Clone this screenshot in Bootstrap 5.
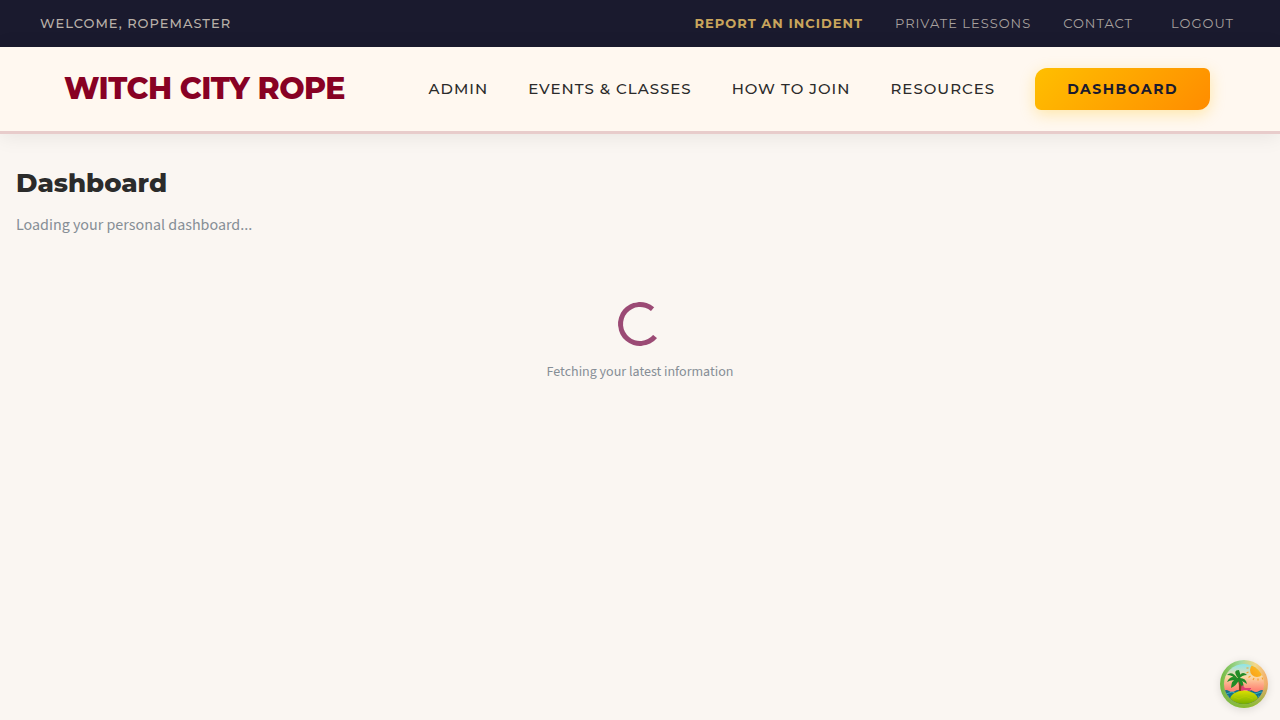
<!DOCTYPE html>
<html lang="en">
<head>
<meta charset="utf-8">
<meta name="viewport" content="width=device-width, initial-scale=1">
<title>Dashboard | Witch City Rope</title>
<link href="https://cdn.jsdelivr.net/npm/bootstrap@5.3.0/dist/css/bootstrap.min.css" rel="stylesheet">
<style>
  :root { --display: Montserrat, Inter, "Liberation Sans", sans-serif; }
  body { background: #faf6f2; color: #2b2b2b; font-family: "Source Sans 3", "Noto Sans CJK SC", sans-serif; }
  a { text-decoration: none; }
  .utility { background: #1a1a2e; color: #b8b0a8; font: 500 13px/23px var(--display); letter-spacing: 1px; padding: 12px 40px; text-transform: uppercase; }
  .utility nav { gap: 32px; }
  .utility a, .utility button { color: #a8a19e; font-weight: 400; }
  .utility a.incident { color: #c9a55c; font-weight: 700; }
  .utility button { background: none; border: 0; padding: 0 6px; letter-spacing: 1px; text-transform: uppercase; line-height: 23px; }
  .masthead { background: #fff8f0; border-bottom: 3px solid #e8cccb; box-shadow: 0 2px 20px rgba(0,0,0,.08); padding: 21px 70px 21px 64px; }
  .masthead .navbar-brand { color: #880124; font: 800 30px/42px var(--display); letter-spacing: -0.5px; padding: 0; margin: 0; }
  .main-links { gap: 40px; }
  .main-links a { color: #2b2b2b; font: 500 15px/42px var(--display); letter-spacing: 1px; text-transform: uppercase; }
  .main-links .btn-dash { background: linear-gradient(135deg, #ffbf00, #ff8c00); border-radius: 12px 6px 12px 6px; box-shadow: 0 4px 15px rgba(255,191,0,.3); color: #1a1a2e; font-weight: 700; font-size: 14px; letter-spacing: 1.5px; padding: 0 32px; }
  h1 { font: 800 26px/34px var(--display); margin: 0 0 12px; }
  .soft { color: #868e96; }
  .intro { font-size: 16px; line-height: 26px; }
  .note { font-size: 14px; line-height: 20px; }
  .loader { width: 44px; height: 44px; border-width: 5px; color: #9b4a75; animation: none; rotate: -5deg; }
  .island { position: fixed; right: 12px; bottom: 12px; width: 48px; height: 48px; border: 0; padding: 0; border-radius: 50%; background: none; box-shadow: 0 2px 8px rgba(0,0,0,.12); }
</style>
</head>
<body>
<div class="utility d-flex justify-content-between">
  <span>Welcome, RopeMaster</span>
  <nav class="d-flex" aria-label="Account">
    <a href="#" class="incident">Report an Incident</a>
    <a href="#">Private Lessons</a>
    <a href="#">Contact</a>
    <button type="button">Logout</button>
  </nav>
</div>
<header class="masthead d-flex justify-content-between align-items-center">
  <a href="#" class="navbar-brand">WITCH CITY ROPE</a>
  <nav class="main-links d-flex align-items-center" aria-label="Main">
    <a href="#">Admin</a>
    <a href="#">Events &amp; Classes</a>
    <a href="#">How to Join</a>
    <a href="#">Resources</a>
    <a href="#" class="btn-dash">Dashboard</a>
  </nav>
</header>
<main class="px-3 pt-3">
  <h1 class="pt-3">Dashboard</h1>
  <p class="soft intro">Loading your personal dashboard...</p>
  <div class="d-flex flex-column align-items-center gap-3 py-5" role="status">
    <div class="spinner-border loader"></div>
    <p class="soft note mb-0">Fetching your latest information</p>
  </div>
</main>
<button type="button" class="island" aria-label="Open query tools">
  <svg class="d-block" width="48" height="48" viewBox="0 0 48 48" aria-hidden="true">
    <defs>
      <linearGradient id="rim" x1="0" y1=".4" x2="1" y2=".5"><stop offset="0" stop-color="#73b93a"/><stop offset=".4" stop-color="#a5dba5"/><stop offset=".7" stop-color="#f4d788"/><stop offset="1" stop-color="#f0a868"/></linearGradient>
      <linearGradient id="rimlow" x1="0" y1="0" x2="0" y2="1"><stop offset=".5" stop-color="#6ba43a" stop-opacity="0"/><stop offset="1" stop-color="#86b82c"/></linearGradient>
      <linearGradient id="sky" x1="0" y1="4" x2="0" y2="36" gradientUnits="userSpaceOnUse"><stop offset="0" stop-color="#8be6ea"/><stop offset=".4" stop-color="#fbd9a4"/><stop offset=".8" stop-color="#ff8775"/></linearGradient>
      <linearGradient id="sand" x1="0" y1="0" x2="0" y2="1"><stop offset="0" stop-color="#dde000"/><stop offset=".7" stop-color="#79b000"/></linearGradient>
      <linearGradient id="sun" x1="1" y1="0" x2="0" y2="1"><stop offset="0" stop-color="#ffc928"/><stop offset="1" stop-color="#f99e17"/></linearGradient>
      <clipPath id="disc"><circle cx="24" cy="24" r="20"/></clipPath>
    </defs>
    <circle cx="24" cy="24" r="24" fill="url(#rim)"/><circle cx="24" cy="24" r="24" fill="url(#rimlow)"/>
    <g clip-path="url(#disc)">
      <path d="M0 0h48v48H0z" fill="url(#sky)"/>
      <circle cx="37" cy="10" r="7" fill="url(#sun)"/>
      <path d="M28.5 8h-2M28.5 12l-2 1M30.5 16l-2 1.5M34 18l-1 2M38 18.5v2M42 17.5l1 2" stroke="#f4a126" stroke-width="1.1"/>
      <path d="M3 31q3-2 6 0t6 0 6 0 6 0 6 0 6 0 6 0v17H3z" fill="#15718a"/>
      <path d="M3 33q3 2 6 0t6 0M32 33q3 2 6 0t6 0M3 36q3 2 6 0M38 36q3 2 6 0" fill="none" stroke="#37adbb"/>
      <path d="M17 18q3 7 1.500 14h3q1-8-2-14z" fill="#8b3a22"/>
      <g fill="#218b26">
        <path d="M18 19q-7-5-11 3 5-3 9-1z"/><path d="M18 19q-6-9-11-4 6 0 9 5z"/><path d="M18 18q-7 2-7 10 6-3 8-8z"/>
        <path d="M18 18q-6-8 1-8 2 4 1 8z"/><path d="M18 18q4-8 9-3-5 0-8 4z"/><path d="M18 18q8-1 9 6-4-3-8-4z"/><path d="M18 18q7 3 5 10-4-5-5-8z"/>
      </g>
      <path d="M22 25l3 3h6v1h-1l1 2h-1l-2-1h-4l-1 1h-2z" fill="#e23d73"/>
      <ellipse cx="24" cy="40" rx="14" ry="9.500" fill="url(#sand)"/>
      <path d="M14 37l5 2 6-3 8 3" stroke="#c1d000" stroke-opacity=".5" fill="none"/>
    </g>
  </svg>
</button>
<script src="https://cdn.jsdelivr.net/npm/bootstrap@5.3.0/dist/js/bootstrap.bundle.min.js"></script>
</body>
</html>
